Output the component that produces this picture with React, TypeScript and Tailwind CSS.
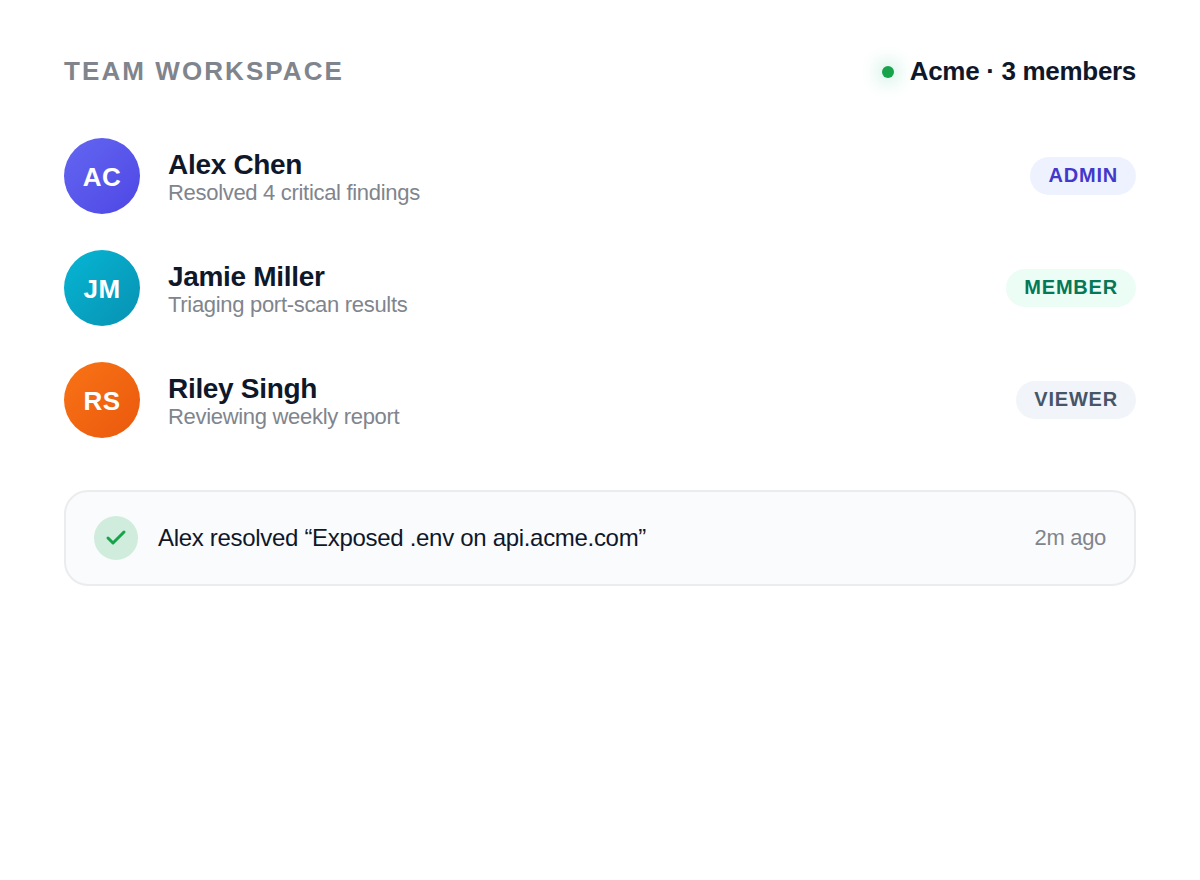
import { Check } from "lucide-react";

interface Member {
  initials: string;
  name: string;
  activity: string;
  role: string;
  avatarClass: string;
  roleClass: string;
}

const members: Member[] = [
  {
    initials: "AC",
    name: "Alex Chen",
    activity: "Resolved 4 critical findings",
    role: "Admin",
    avatarClass: "from-[#6366f1] to-[#4f46e5]",
    roleClass: "bg-[#eef2ff] text-[#4338ca]",
  },
  {
    initials: "JM",
    name: "Jamie Miller",
    activity: "Triaging port-scan results",
    role: "Member",
    avatarClass: "from-[#06b6d4] to-[#0891b2]",
    roleClass: "bg-[#ecfdf5] text-[#047857]",
  },
  {
    initials: "RS",
    name: "Riley Singh",
    activity: "Reviewing weekly report",
    role: "Viewer",
    avatarClass: "from-[#f97316] to-[#ea580c]",
    roleClass: "bg-[#f1f5f9] text-[#475569]",
  },
];

function MemberRow({ member }: { member: Member }) {
  return (
    <li className="flex items-center gap-7">
      <div
        className={`flex size-[76px] shrink-0 items-center justify-center rounded-full bg-linear-135 pt-0.5 text-[26px] leading-10 font-bold tracking-[0.02em] text-white ${member.avatarClass}`}
      >
        {member.initials}
      </div>
      <div className="min-w-0 flex-1">
        <h2 className="text-[28px] leading-[34px] font-bold text-[#0f172a]">{member.name}</h2>
        <p className="text-[22px] leading-[22px] text-[#80858d]">{member.activity}</p>
      </div>
      <span
        className={`rounded-full px-[18px] pt-[7px] pb-[9px] text-xl leading-[22px] font-bold tracking-[0.04em] uppercase ${member.roleClass}`}
      >
        {member.role}
      </span>
    </li>
  );
}

export default function App() {
  return (
    <main className="min-h-screen bg-white px-16 pt-14 font-['Liberation_Sans',sans-serif] text-[28px] tracking-[-0.011em]">
      <header className="flex items-center justify-between">
        <h1 className="text-[26px] leading-[31px] font-bold tracking-[0.08em] text-[#80858d] uppercase">
          Team workspace
        </h1>
        <div className="flex items-center gap-4 text-[26px] leading-[31px] font-bold text-[#0f172a]">
          <span className="size-3 rounded-full bg-[#16a34a] shadow-[0_0_20px_rgba(16,185,129,0.7)]" />
          <span>Acme · 3 members</span>
        </div>
      </header>

      <ul className="mt-[51px] flex flex-col gap-9">
        {members.map((member) => (
          <MemberRow key={member.name} member={member} />
        ))}
      </ul>

      {/* Latest activity */}
      <section className="mt-[52px] flex items-center gap-5 rounded-3xl border-2 border-[#ebecee] bg-[#fafbfd] px-7 py-6">
        <div className="flex size-11 shrink-0 items-center justify-center rounded-full bg-[#d0ecdd] text-[#16a34a]">
          <Check className="size-6" strokeWidth={3} />
        </div>
        <p className="flex-1 text-2xl text-[#0f172a]">Alex resolved “Exposed .env on api.acme.com”</p>
        <time className="text-[22px] leading-[22px] text-[#80858d]">2m ago</time>
      </section>
    </main>
  );
}
